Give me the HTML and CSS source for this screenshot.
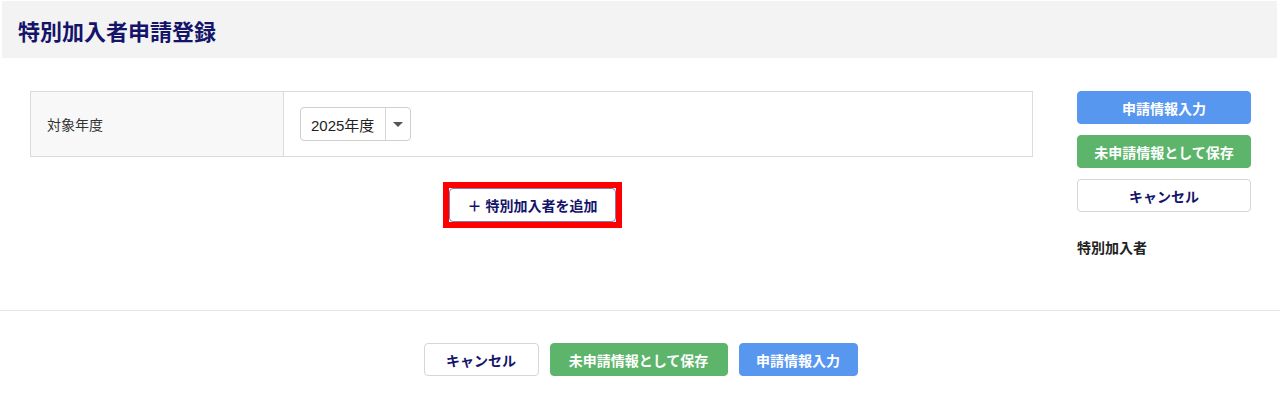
FILE: index.html
```html
<!DOCTYPE html>
<html lang="ja">
<head>
  <meta charset="UTF-8">
  <title>特別加入者申請登録</title>
  <link rel="stylesheet" href="styles.css">
</head>
<body>
  <div class="page-header">
    <h1>特別加入者申請登録</h1>
  </div>

  <div class="content">
    <div class="main">
      <div class="form-table">
        <div class="form-label">対象年度</div>
        <div class="form-value">
          <div class="select">
            <span class="select-text">2025年度</span>
            <span class="select-arrow"></span>
          </div>
        </div>
      </div>
      <div class="add-row">
        <span class="highlight">
          <button class="btn btn-add">＋ 特別加入者を追加</button>
        </span>
      </div>
    </div>

    <div class="side">
      <button class="btn btn-blue">申請情報入力</button>
      <button class="btn btn-green">未申請情報として保存</button>
      <button class="btn btn-white">キャンセル</button>
      <div class="side-title">特別加入者</div>
    </div>
  </div>

  <div class="footer">
    <button class="btn btn-white btn-cancel">キャンセル</button>
    <button class="btn btn-green btn-save">未申請情報として保存</button>
    <button class="btn btn-blue btn-apply">申請情報入力</button>
  </div>
</body>
</html>
```

FILE: styles.css
```css
body { margin: 0; font-family: "Liberation Sans", "Noto Sans CJK JP", sans-serif; color: #333; background: #fff; }
.page-header { margin: 1px 3px 0 2px; height: 57px; background: #f3f3f3; padding-left: 16px; display: flex; align-items: center; }
.page-header h1 { margin: 0; font-size: 22px; font-weight: bold; color: #14146b; }

.content { display: flex; gap: 44px; padding: 33px 29px 52px 30px; }
.main { flex: 1; }
.form-table { display: grid; grid-template-columns: 253px 1fr; border: 1px solid #dcdcdc; height: 64px; }
.form-label { background: #f8f8f8; border-right: 1px solid #dcdcdc; padding-left: 16px; display: flex; align-items: center; font-size: 14px; color: #333; }
.form-value { padding-left: 16px; display: flex; align-items: center; }
.select { display: flex; height: 32px; border: 1px solid #cfcfcf; border-radius: 4px; background: #fff; }
.select-text { padding: 0 11px 0 10px; font-size: 15px; color: #222; display: flex; align-items: center; border-right: 1px solid #d6d6d6; }
.select-arrow { width: 24px; position: relative; }
.select-arrow::after { content: ""; position: absolute; left: 7px; top: 14px; border-left: 5px solid transparent; border-right: 5px solid transparent; border-top: 5px solid #555; }

.add-row { display: flex; justify-content: center; margin-top: 25px; padding-left: 2px; }
.highlight { display: inline-flex; border: 6px solid #f00; }

.btn { font-family: inherit; font-size: 14px; font-weight: bold; height: 33px; border-radius: 4px; border: 1px solid transparent; cursor: pointer; padding: 0; }
.btn-blue { background: #5797f0; border-color: #5797f0; color: #fff; }
.btn-green { background: #5cb56b; border-color: #5cb56b; color: #fff; }
.btn-white { background: #fff; border-color: #d6d6d6; color: #14146b; }
.btn-add { width: 167px; height: 34px; background: #fff; border: 1px solid #7b7fb6; color: #14146b; }

.side { width: 174px; display: flex; flex-direction: column; gap: 11px; }
.side .btn { width: 100%; }
.side-title { margin-top: 15px; font-size: 14px; font-weight: bold; color: #222; line-height: 20px; }

.footer { border-top: 1px solid #e6e6e6; padding-top: 32px; display: flex; justify-content: center; gap: 11px; padding-left: 1px; }
.btn-cancel { width: 115px; }
.btn-save { width: 178px; }
.btn-apply { width: 119px; }
```
